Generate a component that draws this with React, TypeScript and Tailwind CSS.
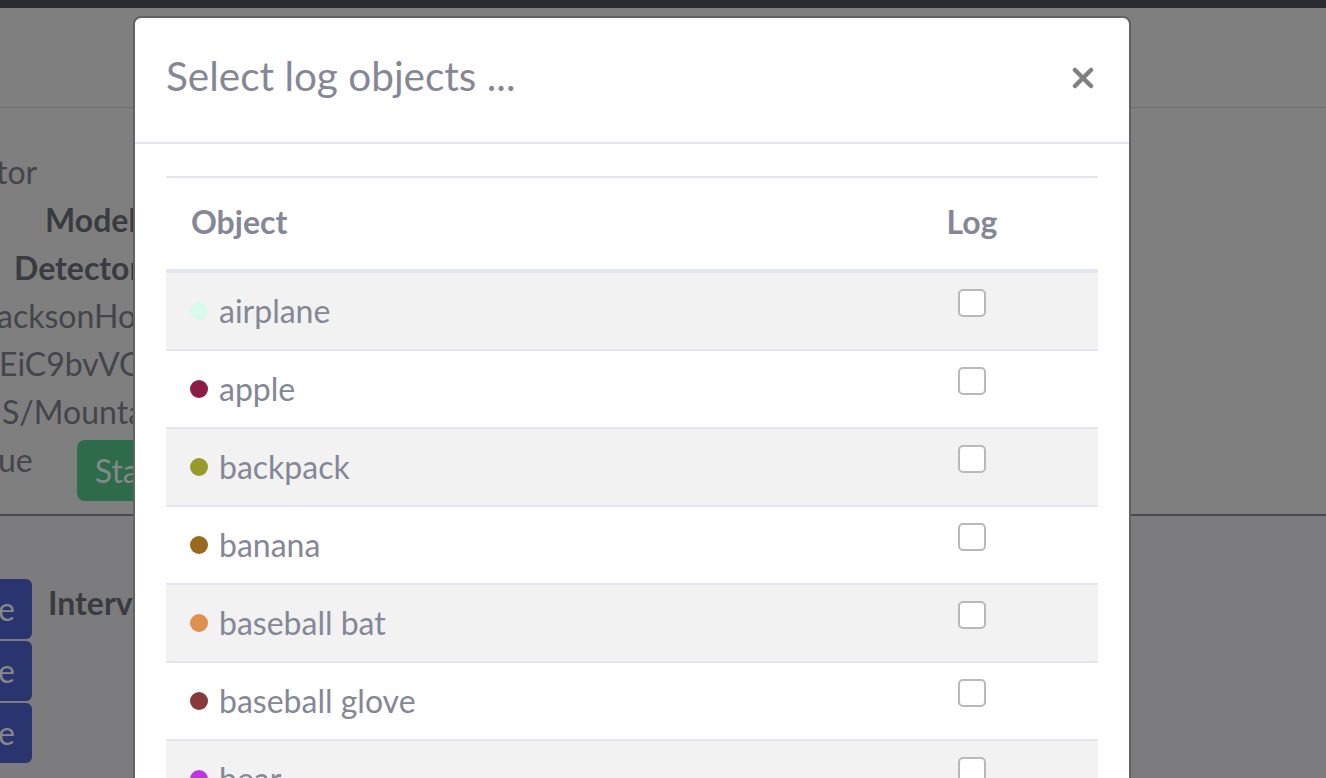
import React from "react";

interface LogObject {
  name: string;
  color: string;
}

const objects: LogObject[] = [
  { name: "airplane", color: "#d9fbea" },
  { name: "apple", color: "#8c1c45" },
  { name: "backpack", color: "#999a2c" },
  { name: "banana", color: "#9a6920" },
  { name: "baseball bat", color: "#df8f4e" },
  { name: "baseball glove", color: "#883a39" },
  { name: "bear", color: "#bc35e0" },
  { name: "bed", color: "#3a7bd5" },
];

const Backdrop: React.FC = () => (
  <div className="flex flex-col text-[32px] text-[#44454b]">
    {/* top chrome */}
    <div className="h-[8px] bg-[#2b2c31]" />
    <div className="h-[100px] border-b border-[#6f6f71] bg-[#7f7f7f]" />

    {/* detector card */}
    <div className="h-[408px] bg-[#7f7f7f] pt-[40px] border-b-2 border-[#48484e]">
      <div className="h-[48px] leading-[48px] whitespace-nowrap -ml-[4px]">tor</div>
      <div className="h-[48px] leading-[48px] whitespace-nowrap pl-[45px] font-bold text-[#3a3b40]">
        Model
      </div>
      <div className="h-[48px] leading-[48px] whitespace-nowrap pl-[14px] font-bold text-[#3a3b40]">
        Detector
      </div>
      <div className="h-[48px] leading-[48px] whitespace-nowrap -ml-[3px]">acksonHole</div>
      <div className="h-[48px] leading-[48px] whitespace-nowrap -ml-[1px]">EiC9bvVG</div>
      <div className="h-[48px] leading-[48px] whitespace-nowrap pl-[2px]">S/Mountain</div>
      <div className="flex items-start whitespace-nowrap">
        <span className="h-[48px] leading-[48px] -ml-[2px]">ue</span>
        <span className="ml-[44px] mt-[4px] flex h-[61px] w-[160px] items-center rounded-[8px] bg-[#2e6b4b] pl-[18px] text-[#858789]">
          Start
        </span>
      </div>
    </div>

    {/* interval section */}
    <div className="flex h-[300px] items-start gap-[16px] bg-[#7c7c7e] pt-[63px]">
      <div className="flex flex-col gap-[2px]">
        {[0, 1, 2].map((i) => (
          <div
            key={i}
            className="flex h-[60px] w-[32px] items-center justify-end rounded-r-[6px] bg-[#2a356f] pr-[17px] text-[#85878c]"
          >
            e
          </div>
        ))}
      </div>
      <div className="h-[48px] leading-[48px] font-bold text-[#3a3b40] whitespace-nowrap">
        Interval
      </div>
    </div>
  </div>
);

const Checkbox: React.FC = () => (
  <span className="mt-[16px] block h-[28px] w-[28px] rounded-[5px] border-2 border-[#b9b9b9] bg-white" />
);

const SelectLogModal: React.FC = () => (
  <div className="absolute left-[133px] top-[16px] w-[998px] rounded-[8px] border-2 border-[#626264] bg-white text-[#858796]">
    {/* header */}
    <div className="flex h-[126px] items-start justify-between border-b-2 border-[#e3e6f0] pl-[31px] pr-[35px] pt-[28px]">
      <h5 className="text-[40.5px] leading-[60px]">Select log objects ...</h5>
      <svg width="22" height="22" viewBox="0 0 22 22" className="mt-[21px]">
        <path d="M3 3 L19 19 M19 3 L3 19" stroke="#808080" strokeWidth="4.5" strokeLinecap="round" />
      </svg>
    </div>

    {/* body */}
    <div className="px-[31px] pt-[32px] pb-[32px]">
      <div className="border-t-2 border-[#e3e6f0]">
        <div className="grid h-[95px] grid-cols-[680px_1fr] items-center border-b-4 border-[#e3e6f0] pb-[4px] text-[32px] font-bold">
          <div className="pl-[25px]">Object</div>
          <div className="text-center">Log</div>
        </div>
        {objects.map((obj, i) => (
          <div
            key={obj.name}
            className={`grid grid-cols-[680px_1fr] text-[32px] ${i > 0 ? "h-[78px] border-t-2 border-[#e3e6f0]" : "h-[76px]"} ${i % 2 === 0 ? "bg-[#f2f2f2]" : "bg-white"}`}
          >
            <div className="flex items-center gap-[11px] pl-[24px]">
              <span className="h-[18px] w-[18px] rounded-full" style={{ backgroundColor: obj.color }} />
              <span className="leading-[48px]">{obj.name}</span>
            </div>
            <div className="flex justify-center">
              <Checkbox />
            </div>
          </div>
        ))}
      </div>
    </div>
  </div>
);

export default function App() {
  return (
    <div
      className="relative h-[778px] w-[1326px] overflow-hidden bg-[#7f7f7f]"
      style={{ fontFamily: "Lato, 'Open Sans', sans-serif" }}
    >
      <Backdrop />
      <SelectLogModal />
    </div>
  );
}
